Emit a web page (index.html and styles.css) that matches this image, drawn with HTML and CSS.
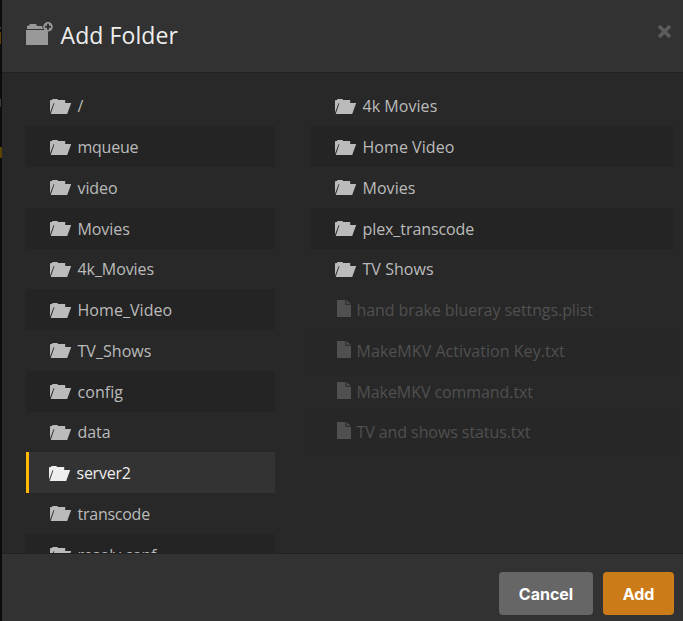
FILE: index.html
```
<!DOCTYPE html>
<html lang="en">
<head>
<meta charset="utf-8">
<title>Add Folder</title>
<link rel="stylesheet" href="styles.css">
</head>
<body>
<svg class="defs" aria-hidden="true">
  <symbol id="folder" viewBox="0 0 22 15">
    <path d="M0 1.3L2 .9 2.5 0H7.4L8 1.1H15.2V4H21.2L17.2 15H.7L4.4 4.2H3.6L0 13.8Z"/>
  </symbol>
  <symbol id="file" viewBox="0 0 14 17">
    <path d="M0 0H8.4V4.7H14V17H0ZM9.4 0L13.8 3.8H9.4Z"/>
  </symbol>
</svg>
<div class="backdrop"><i class="mark m1"></i><i class="mark m2"></i><i class="mark m3"></i><i class="mark m4"></i></div>
<div class="modal">
  <header class="header">
    <svg class="title-icon" viewBox="0 0 28 24"><path d="M0 8H22V23H0ZM1 7V4L3 3.6 4 2H10L11 4H16Q16.2 6 17.5 7Z"/><path fill-rule="evenodd" d="M22 0A4.8 4.8 0 1 0 22 9.6A4.8 4.8 0 1 0 22 0ZM21 1.8H23V3.8H25V5.8H23V7.8H21V5.8H19V3.8H21Z"/></svg>
    <h1>Add Folder</h1>
    <button class="close" aria-label="Close"><svg viewBox="0 0 15 15"><path d="M2 2L13 13M13 2L2 13"/></svg></button>
  </header>
  <main class="body">
    <ul class="list roots">
      <li><svg><use href="#folder"/></svg><span>/</span></li>
      <li class="snug"><svg><use href="#folder"/></svg><span>mqueue</span></li>
      <li><svg><use href="#folder"/></svg><span>video</span></li>
      <li><svg><use href="#folder"/></svg><span>Movies</span></li>
      <li><svg><use href="#folder"/></svg><span>4k_Movies</span></li>
      <li class="loose"><svg><use href="#folder"/></svg><span>Home_Video</span></li>
      <li class="loose"><svg><use href="#folder"/></svg><span>TV_Shows</span></li>
      <li class="loose"><svg><use href="#folder"/></svg><span>config</span></li>
      <li><svg><use href="#folder"/></svg><span>data</span></li>
      <li class="selected snug"><svg><use href="#folder"/></svg><span>server2</span></li>
      <li class="snug"><svg><use href="#folder"/></svg><span>transcode</span></li>
      <li class="snug"><svg><use href="#folder"/></svg><span>resolv.conf</span></li>
    </ul>
    <ul class="list entries">
      <li class="loose"><svg><use href="#folder"/></svg><span>4k Movies</span></li>
      <li class="loose"><svg><use href="#folder"/></svg><span>Home Video</span></li>
      <li class="loose"><svg><use href="#folder"/></svg><span>Movies</span></li>
      <li><svg><use href="#folder"/></svg><span>plex_transcode</span></li>
      <li class="loose"><svg><use href="#folder"/></svg><span>TV Shows</span></li>
      <li class="file"><svg><use href="#file"/></svg><span>hand brake blueray settngs.plist</span></li>
      <li class="file loose"><svg><use href="#file"/></svg><span>MakeMKV Activation Key.txt</span></li>
      <li class="file"><svg><use href="#file"/></svg><span>MakeMKV command.txt</span></li>
      <li class="file"><svg><use href="#file"/></svg><span>TV and shows status.txt</span></li>
    </ul>
  </main>
  <footer class="footer">
    <button class="btn cancel">Cancel</button>
    <button class="btn add">Add</button>
  </footer>
</div>
</body>
</html>
```
FILE: styles.css
```
* { box-sizing: border-box; }
body { margin: 0; height: 621px; overflow: hidden; display: flex; background: #0c0c0c; font-family: "Open Sans", "Noto Sans", sans-serif; }
.defs { position: absolute; width: 0; height: 0; }
.backdrop { position: relative; width: 2px; flex: none; }
.mark { position: absolute; left: 0; width: 1px; }
.m1 { top: 27px; height: 2px; background: #5a3d28; }
.m2 { top: 32px; height: 12px; background: #5b3f08; }
.m3 { top: 99px; height: 8px; background: #3b3b3b; }
.m4 { top: 147px; height: 11px; width: 2px; background: #5b4300; }
.modal { flex: 1; min-width: 0; height: 621px; display: flex; flex-direction: column; background: #282828; }
.header { height: 73px; flex: none; display: flex; align-items: flex-start; padding: 0 11px 0 24px; background: #323232; border-bottom: 1px solid #222; }
.title-icon { width: 28px; height: 24px; margin-top: 22px; fill: #999; }
h1 { margin: 19px auto 0 6.5px; font-size: 23px; line-height: 33px; font-weight: 400; letter-spacing: .1px; color: #eee; }
.close { border: 0; padding: 0; margin-top: 24px; background: none; height: 15px; }
.close svg { display: block; width: 15px; height: 15px; stroke: #5b5b5b; stroke-width: 3.8; }
.body { flex: none; height: 480px; overflow: hidden; display: flex; gap: 36px; padding: 12.6px 9px 0 24px; }
.list { list-style: none; margin: 0; padding: 0; }
.roots { width: 249px; }
.entries { flex: 1; }
.list li { height: 40.75px; display: flex; align-items: center; padding: .8px 0 0 24px; color: #bbb; font-size: 16px; line-height: 24px; letter-spacing: -.08px; white-space: nowrap; }
.list li.snug { letter-spacing: -.25px; }
.list li.loose { letter-spacing: .05px; }
.list li:nth-child(even) { background: #242424; }
.list svg { width: 22px; height: 15px; margin-right: 5.5px; fill: #bbb; flex: none; }
.list .selected, .list li.selected:nth-child(even) { background: #333; color: #eee; border-left: 3px solid #ffb900; padding-left: 20px; }
.list .selected svg { fill: #eee; }
.list .file { color: #505050; padding-left: 26px; }
.list .file:nth-child(n) { background: #282828; }
.list .file:nth-child(odd) { background: #272727; }
.list .file svg { width: 14px; height: 17px; fill: #505050; margin-top: -3px; }
.footer { flex: 1; display: flex; justify-content: flex-end; gap: 10px; padding: 18px 9px 0; background: #323232; border-top: 1px solid #222; }
.btn { border: 0; border-radius: 4px; height: 43px; padding: 0; color: #fff; font: 700 16px Inter, sans-serif; letter-spacing: 0; }
.cancel { width: 94px; background: #666; }
.add { width: 71px; background: #cc7b19; }
```
